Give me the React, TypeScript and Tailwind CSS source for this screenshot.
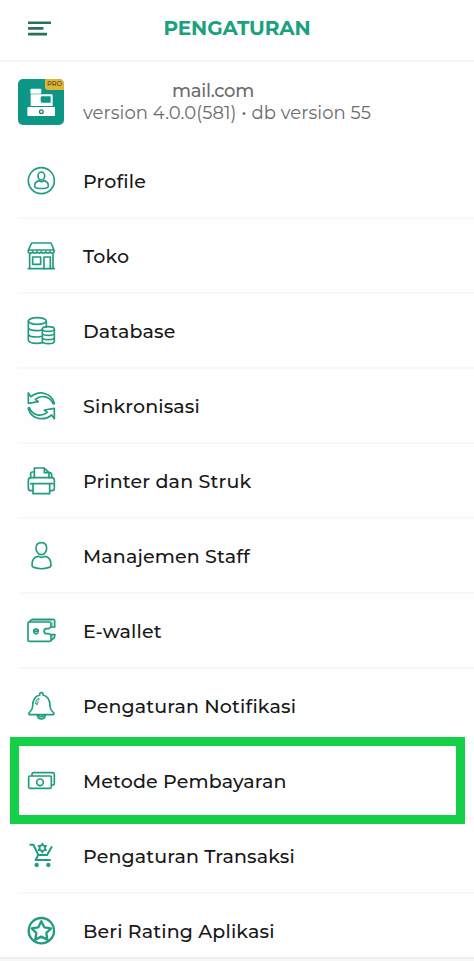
import type { ReactNode } from "react";

type Item = { label: string; icon: ReactNode; highlighted?: boolean };

const items: Item[] = [
  {
    label: "Profile",
    icon: (
      <>
        <circle cx="43" cy="41" r="39" />
        <ellipse cx="43" cy="27" rx="10" ry="12" />
        <path d="M36 41c-7 2-13 6-13 15 0 4 2 6 6 7 9 2 20 2 29 0 4-1 6-3 6-7 0-9-6-13-13-15-5 4-10 4-15 0Z" />
      </>
    ),
  },
  {
    label: "Toko",
    icon: (
      <>
        <path d="M14 3h58l9 21H4L14 3ZM4 24v5c0 6 12 6 13 0 1 6 12 6 13 0 1 6 12 6 13 0 1 6 12 6 13 0 1 6 12 6 13 0 1 6 12 6 12 0v-5M8 34v46M78 34v46M4 80h78" />
        <path d="M17 45h24v22H17zM51 80V45h19v35" />
      </>
    ),
  },
  {
    label: "Database",
    icon: (
      <>
        <ellipse cx="31" cy="12" rx="27" ry="10" />
        <path d="M4 12v57c0 6 12 10 27 10 6 0 11-1 15-2M58 12v17M4 31c0 6 12 10 27 10 6 0 11-1 15-3M4 50c0 6 12 10 27 10 6 0 11-1 14-2" />
        <ellipse cx="64" cy="36" rx="18" ry="7" />
        <path d="M46 36v37c0 4 8 7 18 7s18-3 18-7V36M46 48c0 4 8 7 18 7s18-3 18-7M46 61c0 4 8 7 18 7s18-3 18-7" />
      </>
    ),
  },
  {
    label: "Sinkronisasi",
    icon: (
      <>
        <path d="M4 3v31l30-5-9-7c18-15 44-9 53 12 1 3 5 2 4-1C73 2 37-6 12 14L4 3Z" />
        <path d="M82 80V49l-30 5 9 7C43 76 17 70 8 49c-1-3-5-2-4 1 9 31 45 39 70 19l8 11Z" />
      </>
    ),
  },
  {
    label: "Printer dan Struk",
    icon: (
      <>
        <path d="M22 32V3h30l14 14v15M52 3v14h14" />
        <path d="M22 15h-6c-4 0-5 2-5 5v12M66 17c5 0 8 1 8 5v10" />
        <path d="M16 71h-5c-5 0-7-3-7-7V40c0-5 3-8 8-8h63c5 0 7 3 7 8v24c0 4-2 7-7 7h-5M11 50h66" />
        <path d="M18 50v30h50V50" />
      </>
    ),
  },
  {
    label: "Manajemen Staff",
    icon: (
      <>
        <path d="M43 2c-10 0-16 7-16 17s7 19 16 19 16-9 16-19S53 2 43 2Z" />
        <path d="M33 43c-11 2-18 11-18 25 0 5 3 8 8 9 13 4 28 4 41 0 5-1 8-4 8-9 0-14-7-23-18-25-7 4-14 4-21 0Z" />
      </>
    ),
  },
  {
    label: "E-wallet",
    icon: (
      <>
        <path d="M72 30V20c0-3-2-5-5-5H8c-3 0-5 2-5 5v48c0 3 2 5 5 5h59c3 0 5-2 5-5V53" />
        <path d="m5 16 9-8c1-1 2-1 3-1h61c3 0 5 2 5 5v18M83 53v6c0 2-1 3-2 4l-9 7" />
        <path d="M83 30H72c-4 0-3 5-8 5h-5c-10 0-10 15 0 15h5c4 0 4 3 8 3h11" />
        <path d="M16 11h58M77 15v13M77 55v8" strokeWidth="3" opacity=".5" />
        <path d="M20 43h14c0-9-14-9-14 0 0 8 9 9 13 5" />
      </>
    ),
  },
  {
    label: "Pengaturan Notifikasi",
    icon: (
      <>
        <path d="M38 9c-1-10 11-10 10 0 16 4 21 17 21 33 0 12 7 15 11 21 2 3 0 5-3 5H9c-3 0-5-2-3-5 4-6 11-9 11-21 0-16 5-29 21-33Z" />
        <path d="M31 70c2 14 22 14 24 0M36 70c2 5 12 5 14 0" />
        <path d="M27 35c-2-9 2-14 9-16 2 4-5 6-4 16 0 5-4 5-5 0Z" strokeWidth="3" />
      </>
    ),
  },
  {
    label: "Metode Pembayaran",
    highlighted: true,
    icon: (
      <>
        <rect x="5" y="27" width="68" height="37" rx="4" />
        <path d="M15 26v-4c0-3 2-5 5-5h57c3 0 5 2 5 5v27c0 3-2 5-5 5h-3" />
        <circle cx="39" cy="46" r="10" />
      </>
    ),
  },
  {
    label: "Pengaturan Transaksi",
    icon: (
      <>
        <path d="M10 8h9l15 31h26l14-24M33 40l-7 14h43" strokeWidth="6" />
        <circle cx="29" cy="69" r="6.500" fill="currentColor" stroke="none" />
        <circle cx="64" cy="69" r="6.500" fill="currentColor" stroke="none" />
        <circle cx="46" cy="18" r="8.500" strokeWidth="5.500" />
        <path d="M46 5v3M46 28v3M35 11.500l2 1M55 23.500l2 1M35 24.500l2-1M55 12.500l2-1" strokeWidth="6" />
      </>
    ),
  },
  {
    label: "Beri Rating Aplikasi",
    icon: (
      <>
        <circle cx="43" cy="41" r="38" strokeWidth="7" />
        <path d="m43 13 9 18 20 3-14 14 3 20-18-9-18 9 3-20-14-14 20-3Z" strokeWidth="7" />
      </>
    ),
  },
];

function AppLogo() {
  return (
    <div className="relative h-[46px] w-[46px] shrink-0 overflow-hidden rounded-[5px] bg-[#0c9686]">
      <svg viewBox="0 0 138 138" className="h-full w-full" fill="white">
        <rect x="37" y="29" width="33" height="15" rx="3" />
        <path fillRule="evenodd" d="M38 46h62q4 0 4 4v31H38Zm34 6q-4 0-4 4v11q0 4 4 4h26V52Z" />
        <rect x="28" y="84" width="83" height="27" rx="3" />
        <circle cx="70" cy="98" r="5.500" fill="none" stroke="#28756e" strokeWidth="4" />
      </svg>
      <span className="absolute right-0 top-0 flex h-[11px] w-[19px] items-center justify-center rounded-bl-[3px] bg-[#dfb43a] text-[6.5px] font-semibold leading-none text-[#6c611b]">
        PRO
      </span>
    </div>
  );
}

export default function App() {
  return (
    <main className="flex h-[961px] w-[474px] flex-col overflow-hidden bg-[#fefefe] font-['Montserrat','Inter',sans-serif]">
      <header className="grid h-[62px] shrink-0 grid-cols-[1fr_auto_1fr] items-center border-b-2 border-[#f5f5f5] pb-[4px]">
        <svg viewBox="0 0 23 15" className="ml-7 h-[15px] w-[23px]" fill="#286f5c">
          <rect y="0.400" width="23" height="2.600" rx="0.500" />
          <rect y="6.100" width="15.500" height="2.600" rx="0.500" />
          <rect y="11.800" width="19" height="2.600" rx="0.500" />
        </svg>
        <h1 className="text-[20px] font-bold leading-6 tracking-[-0.1px] text-[#1ba17d]">PENGATURAN</h1>
        <span />
      </header>
      <section className="flex h-[82px] shrink-0 items-start gap-[19px] pl-[18px] pt-[17px]">
        <AppLogo />
        <div className="pt-px text-[#6c6c6c]">
          <p className="pl-[89px] text-[18px] font-medium leading-[22px] tracking-[-0.3px]">mail.com</p>
          <p className="whitespace-nowrap text-[18px] leading-[22px] tracking-[0.06px]">version 4.0.0(581) • db version 55</p>
        </div>
      </section>
      <ul className="flex min-h-0 flex-1 flex-col">
        {items.map((item) => (
          <li key={item.label} className="relative ml-[18px] flex h-[75px] shrink-0 items-center border-b-2 border-[#f8f8f8] pl-[9px]">
            <svg
              viewBox="0 0 84 84"
              className="h-7 w-7 shrink-0 overflow-visible text-[#229c80]"
              fill="none"
              stroke="currentColor"
              strokeWidth="5"
              strokeLinecap="round"
              strokeLinejoin="round"
            >
              {item.icon}
            </svg>
            <span className="ml-7 whitespace-nowrap pt-[2px] text-[19px] font-medium leading-6 tracking-[0.15px] text-[#181818]">{item.label}</span>
            {item.highlighted && <div className="absolute -bottom-[7px] -left-[8px] -top-[7px] right-[9px] z-10 border-[9px] border-[#13d047]" />}
          </li>
        ))}
      </ul>
      <footer className="z-10 h-1 shrink-0 border-t-2 border-[#efefef] bg-[#f6f6f6]" />
    </main>
  );
}
